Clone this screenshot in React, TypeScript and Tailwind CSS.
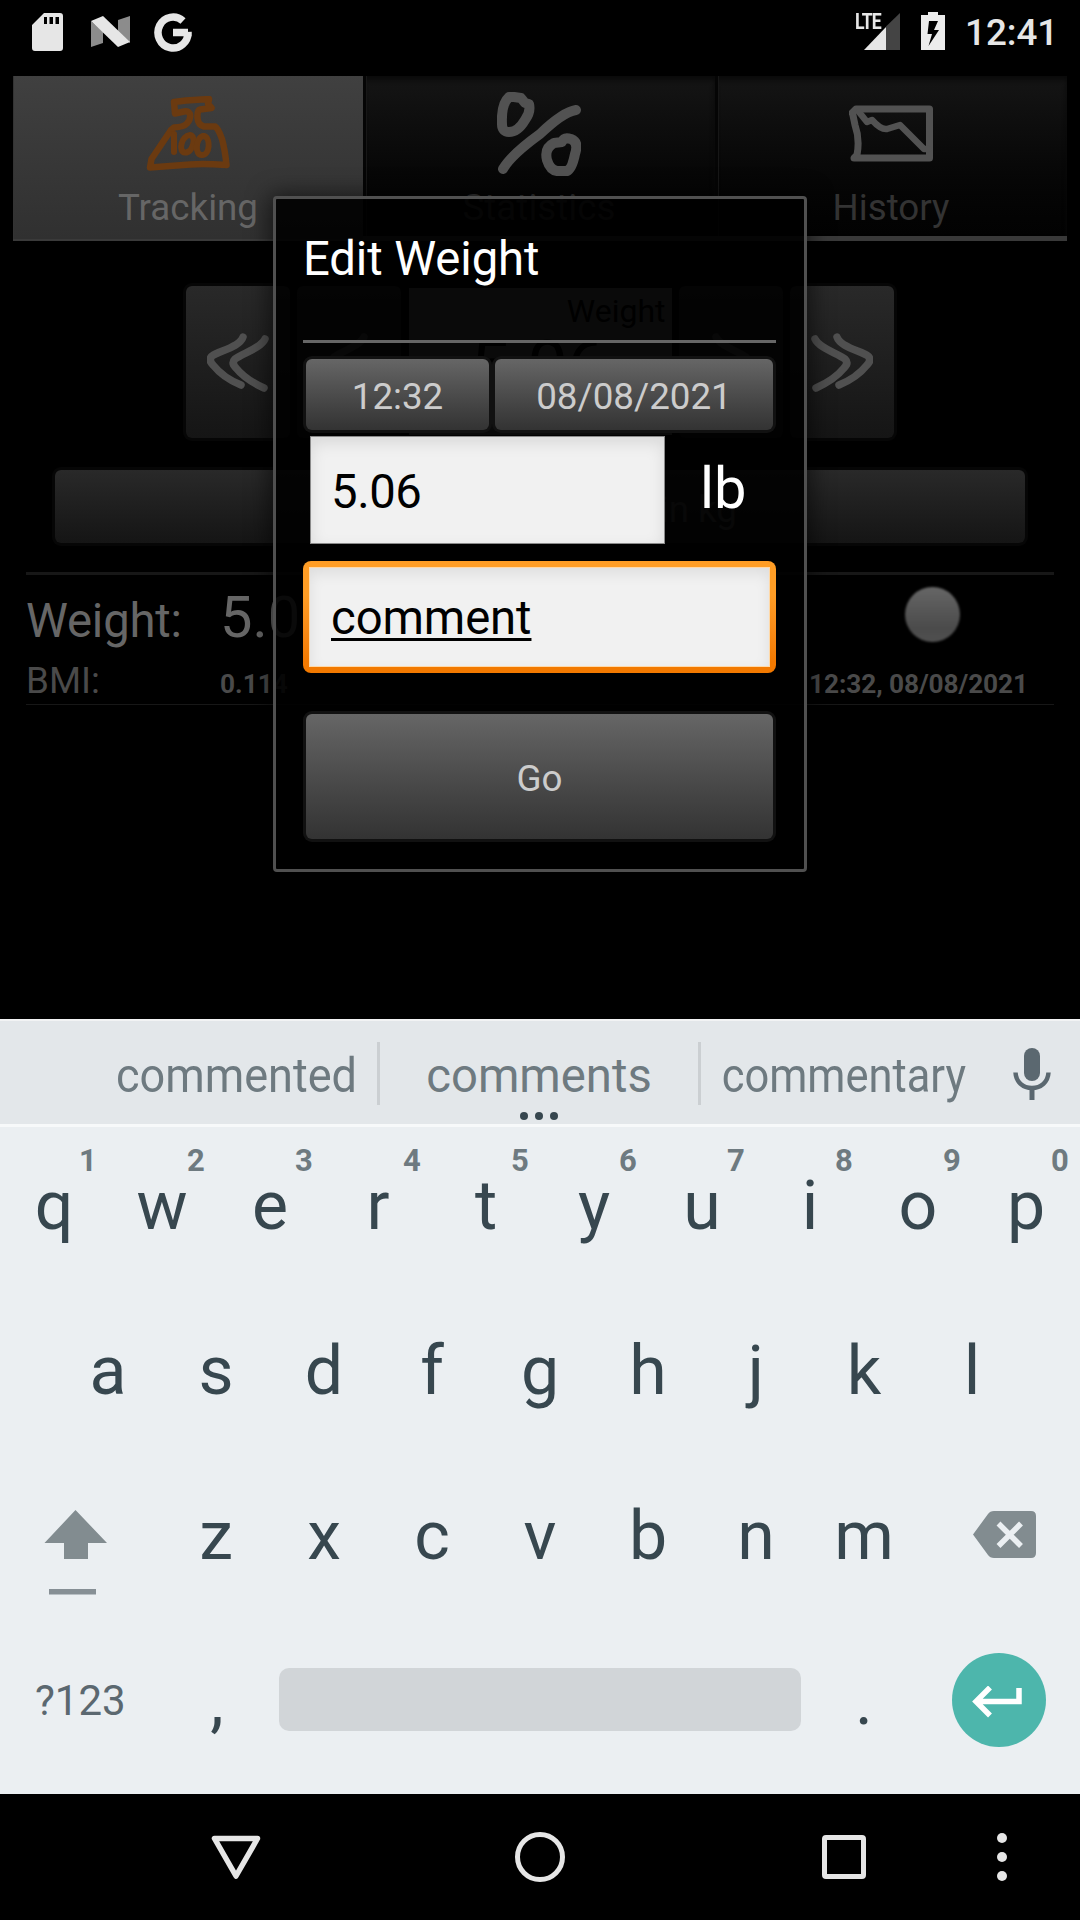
import type { ReactNode } from "react";

const DOUBLE_CHEVRON = [
  "M36 4C33 14 12 18 5 23Q1 27 6 32C14 42 24 48 34 52",
  "M58 6C54 15 36 20 28 26Q24 30 29 35C37 45 46 50 57 55",
];

const SINGLE_CHEVRON = ["M46 4C42 13 24 18 16 24Q12 28 17 33C25 43 34 48 45 53"];

function Chevrons({ flip = false, paths = DOUBLE_CHEVRON }: { flip?: boolean; paths?: string[] }) {
  return (
    <svg
      className={flip ? "w-[62px] h-[60px] -scale-x-100" : "w-[62px] h-[60px]"}
      viewBox="0 0 62 60"
      fill="none"
      stroke="#505050"
      strokeWidth="7.5"
      strokeLinecap="round"
      strokeLinejoin="round"
    >
      {paths.map((d) => (
        <path key={d} d={d} />
      ))}
    </svg>
  );
}

function DimButton({ children }: { children?: ReactNode }) {
  return (
    <div className="w-[104px] h-[152px] rounded-[6px] bg-linear-to-b from-[#292929] to-[#151515] shadow-[0_0_0_3px_#060606] flex items-center justify-center pt-[2px]">
      {children}
    </div>
  );
}

function DialogButton({ className, children }: { className: string; children: ReactNode }) {
  return (
    <div className={`rounded-[9px] bg-[#111111] p-[3px] ${className}`}>
      <div className="h-full rounded-[6px] bg-linear-to-b from-[#666666] to-[#333333] flex items-center justify-center pt-[6px] text-[36.75px] leading-none text-[#cccccc]">
        {children}
      </div>
    </div>
  );
}

function Tab({ label, active, icon }: { label: string; active?: boolean; icon: ReactNode }) {
  return (
    <div
      className={
        active
          ? "w-[350px] h-[165px] flex flex-col items-center bg-linear-to-b from-[#404040] to-[#303030] border-b-2 border-[#3a3a3a] shadow-[inset_1px_0_0_#333333]"
          : "w-[352px] h-[165px] flex flex-col items-center bg-linear-to-b from-[#151515] to-[#020202] shadow-[inset_3px_0_0_#050505,inset_4px_0_0_#171717,inset_0_4px_5px_#0a0a0a] border-b-5 border-b-[#393939]"
      }
    >
      <div className="h-[116px] flex items-center">{icon}</div>
      <div className={active ? "text-[36.75px] leading-[31px] text-[#666666]" : "text-[36.75px] leading-[31px] text-[#333333]"}>
        {label}
      </div>
    </div>
  );
}

function ScaleIcon() {
  return (
    <svg className="w-[84px] h-[76px]" viewBox="0 0 84 76" fill="none" stroke="#6b3a10" strokeWidth="6.5" strokeLinecap="round" strokeLinejoin="round">
      <path d="M28 6L40 4.500L63 3L62 8L65.500 12L54 13.500Q51 14 51.500 22Q52 29 58 30.500H69Q72 32 76 43Q79 54 80.500 69Q58 67.500 44 68.500L4 71.500L5.500 63L25 34L28 31.500Q38 31 41 27.500Q45 23 44 18Q42 14.500 38 15.500L29 17.500Z" />
      <g strokeWidth="6">
        <path d="M28 38V56" />
        <path d="M44 39C35 40 32 56 39 56.500C47 57 51 40 44 39Z" />
        <path d="M57 40C50 42 48 59 56 59C64 59 65 42 58 40" />
      </g>
    </svg>
  );
}

function PercentIcon() {
  return (
    <svg className="w-[84px] h-[84px]" viewBox="0 0 84 84" fill="none" stroke="#525252" strokeWidth="10" strokeLinecap="round" strokeLinejoin="round">
      <path d="M17 5L24 6L28 11L32 12Q34 20 28 28Q21 40 12 40Q5 40 5 32Q4 12 12 5Z" />
      <path d="M6 77Q14 63 43 42Q66 20 79 18" />
      <path d="M65 50Q67 45 74 47Q82 50 78 62Q75 77 70 79H60Q53 78 50 68Q47 56 57 51Z" />
    </svg>
  );
}

function HistoryIcon() {
  return (
    <svg className="w-[84px] h-[58px]" viewBox="0 0 84 58" fill="none" stroke="#525252" strokeWidth="7" strokeLinecap="round" strokeLinejoin="round">
      <path d="M3 8L7 4H80.500V53H5L8 50Q11 34 6 20L3.500 8" />
      <path d="M10 7L18 17L23 15Q32 25 38 24L51 20L75 44L79 44" strokeWidth="6.5" />
    </svg>
  );
}

function StatusBar() {
  return (
    <div className="h-[76px] flex items-start bg-black">
      <svg className="ml-[32px] mt-[12px] w-[31px] h-[39px]" viewBox="0 0 31 39">
        <path fill="#e6e6e6" fillRule="evenodd" d="M12 1H28Q31 1 31 4V36Q31 39 28 39H3Q0 39 0 36V13ZM12 5V12H15V5ZM17.500 5V12H21V5ZM23.500 5V12H27V5Z" />
      </svg>
      <svg className="ml-[28px] mt-[15px] w-[39px] h-[33px]" viewBox="0 0 39 33">
        <path fill="#8c8c8c" d="M0 6L12 17V28L0 32ZM27 5L39 1V28L27 18Z" />
        <path fill="#e6e6e6" d="M0 6L12 1L39 27L27 32Z" />
      </svg>
      <svg className="ml-[24px] mt-[12px] w-[38px] h-[40px]" viewBox="0 0 38 40" fill="none" stroke="#e6e6e6" strokeWidth="7.500">
        <path d="M29 9A15 15.500 0 1 0 34 20V20.500H19" />
      </svg>
      <div className="ml-[661px] mt-[13px] w-[47px] h-[38px] relative">
        <svg className="w-[47px] h-[38px]" viewBox="0 0 47 38">
          <path fill="#444444" d="M33 13.500L47 0V37H33Z" />
          <path fill="#e6e6e6" d="M11 37L33 14V37Z" />
        </svg>
        <span className="absolute left-[2px] top-[-3px] origin-left scale-x-[0.8] text-[22px] leading-[24px] font-bold text-[#e6e6e6] tracking-[-1px]">LTE</span>
      </div>
      <svg className="ml-[21px] mt-[12px] w-[24px] h-[38px]" viewBox="0 0 24 38">
        <path fill="#ececec" fillRule="evenodd" d="M7 0H17V3H24V38H0V3H7ZM8 9L6.500 22H11L7.500 34L18 18H13L17 9Z" />
      </svg>
      <div className="ml-[20px] mt-[12px] text-[36.75px] leading-[42px] font-medium text-[#e6e6e6]">12:41</div>
    </div>
  );
}

function TrackingScreen() {
  return (
    <div className="h-[943px]">
      <div className="mx-[13px] flex">
        <Tab label="Tracking" active icon={<ScaleIcon />} />
        <Tab label="Statistics" icon={<PercentIcon />} />
        <Tab label="History" icon={<HistoryIcon />} />
      </div>

      <div className="mt-[45px] mx-[186px] h-[152px] flex items-start justify-between">
        <DimButton>
          <Chevrons />
        </DimButton>
        <DimButton>
          <Chevrons paths={SINGLE_CHEVRON} />
        </DimButton>
        <div className="mt-[2px] w-[263px] h-[147px] bg-[#666666] text-black overflow-hidden">
          <div className="mt-[3px] pr-[6px] text-right text-[32px] leading-[40px]">Weight</div>
          <div className="mt-[4px] pr-[4px] text-center text-[72px] leading-[66px] tracking-[-1px]">5.06</div>
        </div>
        <DimButton>
          <Chevrons flip paths={SINGLE_CHEVRON} />
        </DimButton>
        <DimButton>
          <Chevrons flip />
        </DimButton>
      </div>

      <div className="mt-[32px] mx-[55px] h-[73px] rounded-[6px] bg-linear-to-b from-[#292929] to-[#151515] shadow-[0_0_0_3px_#060606] flex items-center justify-end pr-[288px] pt-[7px] text-[36.75px] leading-none text-[#505050]">
        in kg
      </div>

      <div className="mt-[29px] mx-[26px] h-[3px] bg-[#171717]" />
      <div className="mx-[26px] h-[87px] flex items-start">
        <div className="pt-[13px] flex items-baseline text-[#666666] leading-[58px]">
          <span className="w-[194px] text-[47.25px] tracking-[-0.2px]">Weight:</span>
          <span className="text-[57.75px]">5.06</span>
        </div>
        <div className="ml-auto mr-[94px] mt-[12px] w-[55px] h-[55px] rounded-full bg-linear-to-b from-[#666666] via-[#4b4b4b] via-75% to-[#505050] blur-[1px]" />
      </div>
      <div className="mx-[26px] h-[42px] flex items-baseline leading-[37px] text-[#4a4a4a]">
        <span className="w-[194px] text-[36.75px]">BMI:</span>
        <span className="text-[26.25px] font-bold">0.114</span>
        <span className="ml-auto mr-[26px] text-[26.25px] font-bold tracking-[-0.1px]">12:32, 08/08/2021</span>
      </div>
      <div className="mx-[26px] h-px bg-[#171717]" />
    </div>
  );
}

function EditDialog() {
  return (
    <div className="absolute left-[273px] top-[196px] w-[534px] h-[676px] rounded-[4px] border-3 border-[#505050] bg-black/90 shadow-[0_2px_22px_4px_rgba(0,0,0,0.55)] pl-[27px] pr-[28px] pt-[30px] flex flex-col">
      <div className="text-[47.25px] leading-[60px] tracking-[-0.1px] text-white">Edit Weight</div>
      <div className="mt-[51px] h-[3px] shrink-0 bg-[#666666]" />
      <div className="mt-[13px] flex">
        <DialogButton className="w-[189px] h-[77px]">12:32</DialogButton>
        <DialogButton className="w-[284px] h-[77px]">08/08/2021</DialogButton>
      </div>
      <div className="mt-[3px] ml-[7px] flex items-center">
        <div className="w-[355px] h-[108px] bg-[#f1f1f1] border border-[#8a8a8a] shadow-[inset_0_6px_16px_rgba(0,0,0,0.1)] pl-[20px] pt-[6px] flex items-center text-[47.25px] leading-none tracking-[-0.4px] text-black">
          5.06
        </div>
        <div className="ml-[35px] text-[57.75px] leading-none text-white pb-[3px]">lb</div>
      </div>
      <div className="mt-[17px] h-[112px] rounded-[8px] bg-linear-to-b from-[#ff9d25] from-30% to-[#f27900] to-90% p-[7px]">
        <div className="h-full bg-[#f1f1f1] shadow-[inset_0_6px_14px_rgba(0,0,0,0.08),0_0_0_1px_#ffd9a8] pl-[21px] pt-[4px] flex items-center text-[47.25px] leading-none tracking-[-0.1px] text-black">
          <span className="underline decoration-3 underline-offset-4 [text-decoration-skip-ink:none]">comment</span>
        </div>
      </div>
      <DialogButton className="mt-[38px] h-[131px]">Go</DialogButton>
    </div>
  );
}

function Key({ label, hint }: { label: string; hint?: string }) {
  return (
    <div className="relative w-[108px] h-[165px] text-center text-[68px] leading-[158px] text-[#37474f]">
      {label}
      {hint && (
        <span className="absolute left-[72px] top-[16px] w-[32px] text-center text-[31px] leading-[36px] font-bold text-[#6e7a80]">{hint}</span>
      )}
    </div>
  );
}

function Keyboard() {
  return (
    <div className="h-[775px] bg-[#ebeff2]">
      <div className="relative h-[108px] flex items-center bg-[#e3e7ea] border-t-2 border-t-[#f2f3f4] border-b-3 border-b-[#f7f9fa] text-[47.25px] leading-[56px] text-[#6e7a80]">
        <div className="w-[377px] pl-[96px] pt-[7px] flex justify-center">
          <span className="scale-x-[0.953]">commented</span>
        </div>
        <div className="mt-[2px] w-[3px] h-[63px] bg-[#cbcfd2]" />
        <div className="w-[318px] pt-[7px] text-center">comments</div>
        <div className="mt-[2px] w-[3px] h-[63px] bg-[#cbcfd2]" />
        <div className="w-[286px] pt-[7px] flex justify-center">
          <span className="scale-x-[0.92]">commentary</span>
        </div>
        <svg className="ml-[26px] mt-[2px] w-[38px] h-[52px]" viewBox="0 0 38 52">
          <rect x="11" y="0" width="16" height="33" rx="8" fill="#5b6870" />
          <path d="M2.500 24.500C3 34 10 40 19 40S35 34 35.500 24.500" fill="none" stroke="#5b6870" strokeWidth="4.500" />
          <path d="M16.500 40h5v12h-5z" fill="#5b6870" />
        </svg>
        <div className="absolute left-0 right-[2px] top-[91px] flex justify-center gap-[7px]">
          <i className="w-[8px] h-[8px] rounded-full bg-[#37474f]" />
          <i className="w-[8px] h-[8px] rounded-full bg-[#37474f]" />
          <i className="w-[8px] h-[8px] rounded-full bg-[#37474f]" />
        </div>
      </div>

      <div className="flex">
        {"qwertyuiop".split("").map((c, i) => (
          <Key key={c} label={c} hint={String((i + 1) % 10)} />
        ))}
      </div>
      <div className="flex justify-center">
        {"asdfghjkl".split("").map((c) => (
          <Key key={c} label={c} />
        ))}
      </div>
      <div className="flex">
        <div className="w-[162px]">
          <svg className="ml-[44px] mt-[53px] w-[64px] h-[85px]" viewBox="0 0 64 85">
            <path fill="#828c90" d="M31.500 0L63 33H44V49H20V33H0.500Z" />
            <rect x="5" y="79" width="47" height="5.500" fill="#868f95" />
          </svg>
        </div>
        {"zxcvbnm".split("").map((c) => (
          <Key key={c} label={c} />
        ))}
        <svg className="ml-[55px] mt-[54px] w-[63px] h-[48px]" viewBox="0 0 63 48">
          <path fill="#828c90" d="M21 0H58Q63 0 63 5V42Q63 47 58 47H21Q17 47 15 44L0 23.500L15 3Q17 0 21 0Z" />
          <path d="M25.500 12.500L48 35M48 12.500L25.500 35" stroke="#ebeff2" strokeWidth="5.500" />
        </svg>
      </div>
      <div className="flex">
        <div className="w-[163px] pl-[35px] text-[42px] leading-[158px] text-[#5b6870]">?123</div>
        <Key label="," />
        <div className="ml-[8px] mt-[46px] w-[522px] h-[63px] rounded-[10px] bg-[#d1d5d8]" />
        <div className="ml-[9px]">
          <Key label="." />
        </div>
        <div className="ml-[34px] mt-[31px] w-[94px] h-[94px] rounded-full bg-[#4db6ac]">
          <svg className="ml-[19px] mt-[33px] w-[52px] h-[32px]" viewBox="0 0 52 32" fill="none" stroke="#ffffff" strokeWidth="5.500">
            <path d="M48 2V15.500H5M19 1.500L5 15.500L19 29.500" />
          </svg>
        </div>
      </div>
    </div>
  );
}

function NavBar() {
  return (
    <div className="h-[126px] flex items-center bg-black">
      <svg className="ml-[211px] w-[50px] h-[44px]" viewBox="0 0 50 44" fill="none" stroke="#e6e6e6" strokeWidth="5.500" strokeLinejoin="round">
        <path d="M3.500 3.500H46.500L25 41Z" />
      </svg>
      <div className="ml-[254px] w-[50px] h-[50px] rounded-full border-[5.5px] border-[#e6e6e6]" />
      <div className="ml-[257px] w-[44px] h-[44px] rounded-[4px] border-5 border-[#e6e6e6]" />
      <div className="ml-[131px] flex flex-col gap-[9px]">
        <i className="w-[10px] h-[10px] rounded-full bg-[#e6e6e6]" />
        <i className="w-[10px] h-[10px] rounded-full bg-[#e6e6e6]" />
        <i className="w-[10px] h-[10px] rounded-full bg-[#e6e6e6]" />
      </div>
    </div>
  );
}

export default function App() {
  return (
    <div className="relative w-[1080px] h-[1920px] overflow-hidden bg-black font-['Roboto',sans-serif] whitespace-nowrap">
      <StatusBar />
      <TrackingScreen />
      <Keyboard />
      <NavBar />
      <EditDialog />
    </div>
  );
}
